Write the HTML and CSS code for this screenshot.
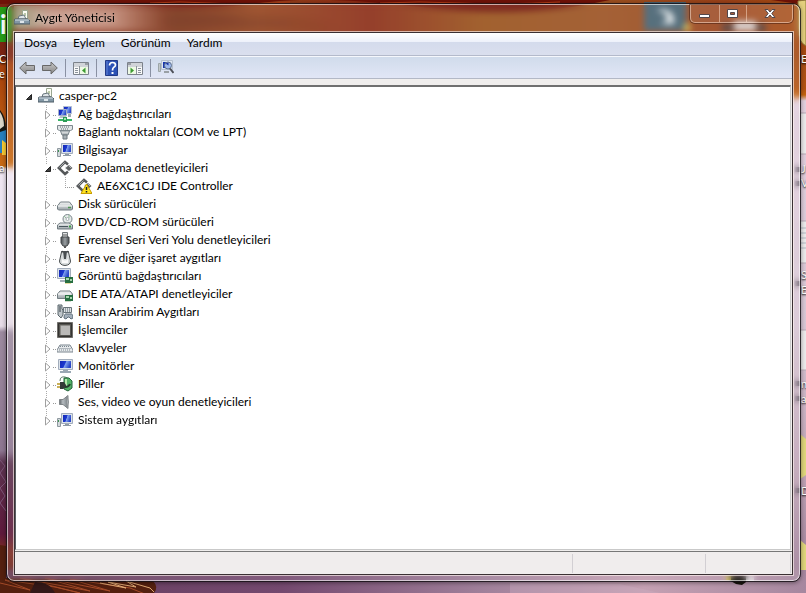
FILE: index.html
```html
<!DOCTYPE html>
<html lang="tr">
<head>
<meta charset="utf-8">
<meta name="viewport" content="width=device-width, initial-scale=1">
<title>Aygıt Yöneticisi</title>
<link rel="stylesheet" href="styles.css">
</head>
<body>
<svg class="wallpaper" viewBox="0 0 806 593" preserveAspectRatio="none" aria-hidden="true">
  <defs>
    <linearGradient id="sky" x1="0" y1="0" x2="0" y2="1">
      <stop offset="0" stop-color="#8c3412"/><stop offset=".06" stop-color="#9a4a1c"/><stop offset=".15" stop-color="#b35412"/>
      <stop offset=".16" stop-color="#c4640e"/><stop offset=".17" stop-color="#e2d0de"/><stop offset=".55" stop-color="#d8c6d4"/>
      <stop offset=".8" stop-color="#bfa3b5"/><stop offset="1" stop-color="#9a7a94"/>
    </linearGradient>
    <linearGradient id="left" x1="0" y1="0" x2="0" y2="1">
      <stop offset="0" stop-color="#8c2c10"/><stop offset=".12" stop-color="#a8430c"/><stop offset=".28" stop-color="#c76a14"/>
      <stop offset=".285" stop-color="#efe6f2"/><stop offset=".55" stop-color="#e6dbe6"/><stop offset=".56" stop-color="#9c8a9f"/>
      <stop offset=".76" stop-color="#8d7690"/><stop offset=".78" stop-color="#5c3450"/><stop offset=".9" stop-color="#5e1a3c"/>
      <stop offset=".93" stop-color="#7c2c22"/><stop offset="1" stop-color="#5c2010"/>
    </linearGradient>
    <linearGradient id="sea" x1="0" y1="0" x2="1" y2="0">
      <stop offset="0" stop-color="#643c5c"/><stop offset=".35" stop-color="#74496f"/><stop offset=".6" stop-color="#a0809a"/>
      <stop offset=".8" stop-color="#c4a0b2"/><stop offset="1" stop-color="#a6879f"/>
    </linearGradient>
    <linearGradient id="top" x1="0" y1="0" x2="1" y2="0">
      <stop offset="0" stop-color="#7a2412"/><stop offset=".12" stop-color="#93402a"/><stop offset=".22" stop-color="#7c3418"/>
      <stop offset=".32" stop-color="#94431c"/><stop offset=".46" stop-color="#8a2a14"/><stop offset=".6" stop-color="#985018"/>
      <stop offset=".75" stop-color="#9a5020"/><stop offset=".9" stop-color="#984018"/><stop offset="1" stop-color="#a64b12"/>
    </linearGradient>
    <filter id="soft" x="-10%" y="-60%" width="120%" height="220%"><feGaussianBlur stdDeviation="4"/></filter>
    <linearGradient id="haze" x1="0" y1="0" x2="1" y2="0">
      <stop offset="0" stop-color="#9fb894"/><stop offset=".25" stop-color="#cfa898"/><stop offset=".7" stop-color="#cf9f8c" stop-opacity=".8"/><stop offset="1" stop-color="#c08468" stop-opacity="0"/>
    </linearGradient>
  </defs>
  <rect width="806" height="593" fill="url(#sky)"/>
  <rect width="400" height="593" fill="url(#left)"/>
  <rect width="806" height="60" fill="url(#top)"/>
  <path d="M0 4Q60 1 130 6T260 3T420 7T600 2T806 5V0H0z" fill="#6f1208"/>
  <path d="M150 3Q180 1 210 3T290 2M380 3Q420 1 460 3T560 2" stroke="#b33c14" fill="none"/>
  <path d="M165 18Q210 10 250 19Q290 16 335 30L300 26Q230 30 165 24z" fill="#642410" opacity=".5" filter="url(#soft)"/>
  <rect x="14" y="6" width="150" height="24" fill="url(#haze)" opacity=".8"/>
  <rect x="-2" y="7" width="14" height="35" fill="#269b18"/>
  <rect x="644" y="2" width="42" height="29" fill="#45606f"/><path d="M656 10q20-3 18 14h-14q16-7-4-14" fill="#dbe1e4"/>
  <path d="M684 24h6v7h-6z" fill="#d6c24d"/><rect x="734" y="21" width="22" height="10" fill="#d4cccb"/><path d="M722 24h12v7h-12zM756 24h10v7h-10z" fill="#4b3a38"/>
  <path d="M798 1l8-1v46q-8-4-8-18z" fill="#e3cf7d" stroke="#8d7639"/>
  <path d="M0 110q6 7 6 19t-6 20z" fill="#151711"/><path d="M0 112q4 6 4 14l-4 3z" fill="#d9d5c6"/>
  <path d="M0 132l6-2v23H0z" fill="#277fbd"/><path d="M2 140l4 3v12H2z" fill="#f5ca35"/>
  <g fill="#ebe9ea" stroke="#b8a9b5"><path d="M800 113h8v41h-8zM800 221h8v42h-8zM800 330h8v40h-8z"/></g>
  <path d="M800 228h6m-6 5h6m-6 5h6m-6 5h6m-6 5h6" stroke="#b3b9c2"/>
  <path d="M800 434l6 5v36l-6 4zM800 540l6 5v38l-6 5z" fill="#dfd67b"/>
  <path d="M795 167h5v5h-5zM795 181h5v5h-5zM795 281h5v5h-5zM795 381h5v5h-5zM795 396h5v5h-5zM795 488h5v5h-5z" fill="#4d4650"/>
  <rect y="570" width="806" height="23" fill="url(#sea)"/>
  <path d="M0 545l6 1v32l147 3q6 6 1 12H0z" fill="#54200f"/>
  <path d="M0 583l30 7L5 580l50 7 25 6-60-15 70 13-45-13 65 13-40-12 60 9 20 8" fill="none" stroke="#a34a28"/>
  <path d="M100 583l26 5-18-6 28 5-10-6 24 7 4 4" fill="none" stroke="#e0a873"/>
  <path d="M35 582q15 0 20 11H30z" fill="#331818"/>
  <path d="M0 460l5 6-5 7 6 9-6 6 5 8-5 7 6 8" fill="none" stroke="#7c5677"/>
  <path d="M510 593v-10l110 1 40 9z" fill="#cdaec2" opacity=".35"/>
  <path d="M728 574h18v8l-4 3-6-1-7-4z" fill="#17130d"/><path d="M726 574h5v6h-5z" fill="#d6c54e"/><path d="M746 574h8v7h-8z" fill="#e2dce0"/>
</svg>
<div class="desktop-labels" aria-hidden="true">
  <span class="tile-letter">i</span><span class="dl l1">C</span><span class="dl l2">e</span><span class="dl l3">a</span>
  <span class="dl r1">ES</span><span class="dl r2">J</span><span class="dl r3">V</span><span class="dl r4">S</span><span class="dl r5">E</span><span class="dl r6">n</span><span class="dl r7">a</span><span class="dl r8">D</span>
</div>

<svg class="sprites" aria-hidden="true">
  <defs>
    <linearGradient id="blue" x1="0" y1="0" x2="1" y2=".3"><stop offset="0" stop-color="#1428b4"/><stop offset=".5" stop-color="#1c38d0"/><stop offset=".58" stop-color="#7fa0ee"/><stop offset="1" stop-color="#2a48c8"/></linearGradient>
    <linearGradient id="metal" x1="0" y1="0" x2="0" y2="1"><stop offset="0" stop-color="#f4f6f6"/><stop offset="1" stop-color="#9ba3a8"/></linearGradient>
    <linearGradient id="dark" x1="0" y1="0" x2="1" y2="0"><stop offset="0" stop-color="#4a4f52"/><stop offset=".5" stop-color="#9a9fa2"/><stop offset="1" stop-color="#4a4f52"/></linearGradient>
    <linearGradient id="cone" x1="0" y1="0" x2="1" y2="0"><stop offset="0" stop-color="#60666a"/><stop offset=".4" stop-color="#b6bcc0"/><stop offset="1" stop-color="#777e83"/></linearGradient>
    <linearGradient id="arrow" x1="0" y1="0" x2="0" y2="1"><stop offset="0" stop-color="#c9c9c9"/><stop offset="1" stop-color="#858585"/></linearGradient>
  </defs>
  <symbol id="i-pc" viewBox="0 0 16 16"><path d="M8.500.5h5v8h-5z" fill="#fbfcf4" stroke="#9aa791"/><path d="M10 3h2v3h-2z" fill="#b9c7a8"/><path d="M5 6l5-1 2 4H4z" fill="#dfe5e8" stroke="#6a777e"/><path d="M1 9h13l2 2v3H0v-3z" fill="#8297a5" stroke="#4e5c66"/><path d="M1 10h14" stroke="#d3dfe6"/><path d="M6 11h4v2H6z" fill="#dde6eb"/></symbol>
  <symbol id="i-net" viewBox="0 0 16 16"><path d="M6.500.5h8v7h-8z" fill="url(#blue)" stroke="#b4bfd2"/><path d="M1.500 3.500h8v6h-8z" fill="url(#blue)" stroke="#a5b0c8"/><path d="M3 10h6l1 2H2z" fill="#b9c3ca"/><path d="M11 8h3v3h-3z" fill="#9eaab2"/><path d="M1 13h14v2H1z" fill="#38b466"/><path d="M6 11h4v5H6z" fill="#2a9b55"/><path d="M7 12h2v2H7z" fill="#9be5ae"/></symbol>
  <symbol id="i-port" viewBox="0 0 16 16"><path d="M.5 1.500h15v4l-2 1h-11l-2-1z" fill="#e1e5e7" stroke="#7c878d"/><path d="M3 3h10M4 5h8" stroke="#616c73" stroke-dasharray="1 1"/><path d="M3.500 7h9l-1.500 4H5z" fill="url(#metal)" stroke="#7b868c"/><path d="M6 11h4v4H6z" fill="#a9b2b7" stroke="#6e797f"/></symbol>
  <symbol id="i-comp" viewBox="0 0 16 16"><path d="M.5 6.500h3v8h-3z" fill="#d3d9dc" stroke="#8e999f"/><path d="M1 8h1v2H1z" fill="#3d9451"/><path d="M4.500 1.500h11v10h-11z" fill="#dce2e9" stroke="#a2adbc"/><path d="M6 3h8v7H6z" fill="url(#blue)"/><path d="M8 12h4v1h2v1H6v-1h2z" fill="#8f9ba6"/></symbol>
  <symbol id="i-ctrl" viewBox="0 0 16 16"><path d="M11 4.500L8 2 1.800 8l6.200 6 3-2.500" fill="none" stroke="#55585a" stroke-width="2.500"/><path d="M7.500 2.500L2.500 7.500" stroke="#adb1b3"/><path d="M8 8h6" stroke="#e6e8e8" stroke-width="3"/><path d="M12 5l3.500 3L12 11 8.500 8z" fill="#5c5f61"/><path d="M12 6l2 2" stroke="#b4b6b7"/></symbol>
  <symbol id="i-warn" viewBox="0 0 16 16"><use href="#i-ctrl"/><path d="M10.500 6L16 15.500H5z" fill="#ffe31e" stroke="#c79c00"/><path d="M10.500 9v3m0 1v1.500" stroke="#222" stroke-width="1.500"/></symbol>
  <symbol id="i-disk" viewBox="0 0 16 16"><path d="M3.500 6h9l3 4v3l-1 1h-13l-1-1v-3z" fill="url(#metal)" stroke="#727d82"/><path d="M1 10h14" stroke="#f6f8f8"/><path d="M11 11.500h3" stroke="#4c944f" stroke-width="1.500"/></symbol>
  <symbol id="i-dvd" viewBox="0 0 16 16"><circle cx="10.500" cy="5" r="4.500" fill="#e7ebea" stroke="#79858a"/><circle cx="10.500" cy="5" r="1.500" fill="#fff" stroke="#a2acaf"/><path d="M7 2l2 2m3-3v3" stroke="#91ba9a"/><path d="M3 9h9l3.500 2v4H.5v-4z" fill="url(#metal)" stroke="#727d82"/><path d="M2 12.500h9" stroke="#48565d"/><path d="M12 12.500h2" stroke="#3ca044" stroke-width="2"/></symbol>
  <symbol id="i-usb" viewBox="0 0 16 16"><path d="M5.500.5h5v5h-5z" fill="#e0e3e4" stroke="#71777a"/><path d="M7 2v2m2-2v2" stroke="#555"/><path d="M4 5h8v6l-2 3H6l-2-3z" fill="url(#dark)" stroke="#44484a"/><path d="M7 14h2v2H7z" fill="#555"/></symbol>
  <symbol id="i-mouse" viewBox="0 0 16 16"><path d="M5 1l1 5M11 1l-1 5" stroke="#383c3e" stroke-width="2"/><path d="M4.500 2h7l2 9q0 4-5.500 4.500Q2.500 15 2.500 11z" fill="#d8dcdd" stroke="#4a4f51"/><path d="M6 1h4l-1 8H7z" fill="#484d50"/><path d="M5 9q3 3 6 0v4H5z" fill="#fafafa"/></symbol>
  <symbol id="i-disp" viewBox="0 0 16 16"><path d="M.5.500h13v10H.5z" fill="#dce2e9" stroke="#a2adbc"/><path d="M2 2h10v7H2z" fill="url(#blue)"/><path d="M3 12h5v2H3z" fill="#a4afb9"/><path d="M8 9h8v6H8z" fill="#276e41"/><path d="M9 10h3v2H9zM13 11h2v2h-2z" fill="#a6d5ad"/><path d="M9 15v1m2-1v1m2-1v1" stroke="#d1b944"/></symbol>
  <symbol id="i-ide" viewBox="0 0 16 16"><path d="M3 5h10l2.500 3v4.500H.5V8z" fill="url(#metal)" stroke="#737e83"/><path d="M1 8h13" stroke="#fff"/><path d="M8 9h8v6H8z" fill="#276e41"/><path d="M9 10h3v2H9zM13 11h2v2h-2z" fill="#a6d5ad"/><path d="M9 15v1m2-1v1m2-1v1" stroke="#a5b697"/></symbol>
  <symbol id="i-hid" viewBox="0 0 16 16"><path d="M1 1h4v4l1 1v5l-2 3-3-3V6z" fill="#bfc6ca" stroke="#59646a"/><path d="M3 2v6" stroke="#343e44"/><path d="M6.500 3.500h8v5h-8z" fill="#dce1e4" stroke="#687379"/><path d="M8 5h6M8 7h6" stroke="#4f5b61" stroke-dasharray="1 1"/><path d="M7 14q0-5 3-4h3q3-1 3 4l-2 1-2-2h-1l-2 2z" fill="#a3afba" stroke="#606f7b"/></symbol>
  <symbol id="i-cpu" viewBox="0 0 16 16"><path d="M.5.5h15v15H.5z" fill="#6a6861" stroke="#2e2d29" stroke-dasharray="1 1"/><path d="M1.500 1.500h13v13h-13z" fill="#55544f" stroke="#343331"/><path d="M4 4h9v9H4z" fill="#bab9b7"/><path d="M3.500 13V3.500H13" stroke="#8c8b87" fill="none"/></symbol>
  <symbol id="i-key" viewBox="0 0 16 16"><path d="M3 5h10l3 5v2H0v-2z" fill="#e7eaec" stroke="#7b858e"/><path d="M3 6.500h10M2.500 8.500h11M2 10h12" stroke="#7b8790" stroke-dasharray="1 1"/></symbol>
  <symbol id="i-mon" viewBox="0 0 16 16"><path d="M1.500 1.500h14v10h-14z" fill="#dce2e9" stroke="#a2adbc"/><path d="M3 3h11v7H3z" fill="url(#blue)"/><path d="M6 12h5v1h3v2H3v-2h3z" fill="#9ba8b4"/></symbol>
  <symbol id="i-bat" viewBox="0 0 16 16"><path d="M3 5q0-5 5-4t5 4" fill="none" stroke="#5d7c68"/><path d="M7 2h5l3 3v7l-4 3-4-2z" fill="#54b267" stroke="#23633a"/><path d="M9 3v8" stroke="#b6e9ae" stroke-width="2"/><path d="M0 8h3m-3 3h3" stroke="#b89724" stroke-width="1.500"/><path d="M3 6h4l2 3v2l-3 2H3z" fill="#333a37"/><path d="M8 11q4 0 5-3" stroke="#263c2d" stroke-width="2" fill="none"/></symbol>
  <symbol id="i-snd" viewBox="0 0 16 16"><path d="M2.500 5.500H6l5-4v13l-5-4H2.500z" fill="url(#cone)" stroke="#7f8588"/><path d="M10 2q3 6 0 12z" fill="#cdd2d5" stroke="#8b9093"/></symbol>
  <symbol id="i-back" viewBox="0 0 16 16"><path d="M.7 8L7 2v3.500h8.500v5H7V14z" fill="url(#arrow)" stroke="#686868"/></symbol>
  <symbol id="i-pane" viewBox="0 0 16 16"><path d="M.5 2.500h15v12H.5z" fill="#fafafa" stroke="#7c828b"/><path d="M1 4h14M1 6h14" stroke="#a8aeb7"/><path d="M12 4h3" stroke="#626971"/><path d="M6.500 6v8" stroke="#8d949b"/><path d="M2 8.500h3m-3 2h3m-3 2h3" stroke="#8a929a"/><path d="M7 7h8v7H7z" fill="#eefae4"/><path d="M12.500 7.500v6L9 10.500z" fill="#3d9b32"/></symbol>
  <symbol id="i-help" viewBox="0 0 16 16"><path d="M1.500.5h12v15h-12z" fill="#2c51b5" stroke="#233a86"/><path d="M3 1v14" stroke="#6384d6"/><path d="M5.500 5.500q0-3 3-3t3 2.500q0 1.500-2 2.500-1 1-1 3" fill="none" stroke="#fff" stroke-width="1.700"/><path d="M7.500 12h2v2h-2z" fill="#fff"/></symbol>
  <symbol id="i-scan" viewBox="0 0 16 16"><path d="M.5 3.500h2v8h-2z" fill="#c3c9ca" stroke="#9da6a8"/><path d="M3.500.5h11v9h-11z" fill="#dde5f2" stroke="#b4bfce"/><path d="M5 2h4v6H5z" fill="#1735ab"/><circle cx="10" cy="5.500" r="3.500" fill="#9db8ec" stroke="#5f718e"/><path d="M7.500 3.500l3-1v3z" fill="#1931a2"/><path d="M12 8.500l3.500 4.500" stroke="#4c4e57" stroke-width="2"/><path d="M6 12h5" stroke="#9aa0a5" stroke-width="2"/></symbol>
  <symbol id="i-closed" viewBox="0 0 10 10"><path d="M2.500 1v8L7 5z" fill="#fff" stroke="#a0a0a0"/></symbol>
  <symbol id="i-open" viewBox="0 0 10 10"><path d="M7.500 2.500v5h-5z" fill="#404040" stroke="#222"/></symbol>
</svg>

<main class="window">
  <header class="titlebar">
    <svg class="icon"><use href="#i-pc"/></svg>
    <h1>Aygıt Yöneticisi</h1>
    <div class="controls">
      <button class="min" aria-label="Simge durumuna küçült"><svg viewBox="0 0 14 12"><path d="M1.500 6.500h10v3h-10z" fill="#fff" stroke="#53474a"/></svg></button>
      <button class="max" aria-label="Ekranı kapla"><svg viewBox="0 0 14 12"><path d="M1.500 1.500h10v8h-10zM4.500 4.500h4v2h-4z" fill="#fff" fill-rule="evenodd" stroke="#53474a"/></svg></button>
      <button class="close" aria-label="Kapat"><svg viewBox="0 0 14 12"><path d="M2 1.500h3L7 4l2-2.500h3L8.800 5.500 12 9.500H9L7 7 5 9.500H2l3.200-4z" fill="#fff" stroke="#53474a"/></svg></button>
    </div>
  </header>
  <div class="client">
    <nav class="menu">
      <button>Dosya</button><button>Eylem</button><button>Görünüm</button><button>Yardım</button>
    </nav>
    <div class="toolbar" role="toolbar">
      <button aria-label="Geri"><svg class="icon"><use href="#i-back"/></svg></button>
      <button aria-label="İleri"><svg class="icon flip"><use href="#i-back"/></svg></button>
      <span class="sep"></span>
      <button aria-label="Konsol ağacı"><svg class="icon"><use href="#i-pane"/></svg></button>
      <span class="sep"></span>
      <button aria-label="Yardım"><svg class="icon"><use href="#i-help"/></svg></button>
      <button aria-label="Eylem bölmesi"><svg class="icon flip"><use href="#i-pane"/></svg></button>
      <span class="sep"></span>
      <button aria-label="Donanım değişikliklerini tara"><svg class="icon"><use href="#i-scan"/></svg></button>
    </div>
    <section class="view">
      <ul class="tree">
        <li>
          <div class="row root"><button class="toggle" aria-label="Daralt"><svg><use href="#i-open"/></svg></button><svg class="icon"><use href="#i-pc"/></svg><span>casper-pc2</span></div>
          <ul>
            <li><div class="row"><button class="toggle" aria-label="Genişlet"><svg><use href="#i-closed"/></svg></button><svg class="icon"><use href="#i-net"/></svg><span>Ağ bağdaştırıcıları</span></div></li>
            <li><div class="row"><button class="toggle" aria-label="Genişlet"><svg><use href="#i-closed"/></svg></button><svg class="icon"><use href="#i-port"/></svg><span>Bağlantı noktaları (COM ve LPT)</span></div></li>
            <li><div class="row"><button class="toggle" aria-label="Genişlet"><svg><use href="#i-closed"/></svg></button><svg class="icon"><use href="#i-comp"/></svg><span>Bilgisayar</span></div></li>
            <li><div class="row"><button class="toggle" aria-label="Daralt"><svg><use href="#i-open"/></svg></button><svg class="icon"><use href="#i-ctrl"/></svg><span>Depolama denetleyicileri</span></div>
              <ul>
                <li><div class="row"><span class="toggle"></span><svg class="icon"><use href="#i-warn"/></svg><span>AE6XC1CJ IDE Controller</span></div></li>
              </ul>
            </li>
            <li><div class="row"><button class="toggle" aria-label="Genişlet"><svg><use href="#i-closed"/></svg></button><svg class="icon"><use href="#i-disk"/></svg><span>Disk sürücüleri</span></div></li>
            <li><div class="row"><button class="toggle" aria-label="Genişlet"><svg><use href="#i-closed"/></svg></button><svg class="icon"><use href="#i-dvd"/></svg><span>DVD/CD-ROM sürücüleri</span></div></li>
            <li><div class="row"><button class="toggle" aria-label="Genişlet"><svg><use href="#i-closed"/></svg></button><svg class="icon"><use href="#i-usb"/></svg><span>Evrensel Seri Veri Yolu denetleyicileri</span></div></li>
            <li><div class="row"><button class="toggle" aria-label="Genişlet"><svg><use href="#i-closed"/></svg></button><svg class="icon"><use href="#i-mouse"/></svg><span>Fare ve diğer işaret aygıtları</span></div></li>
            <li><div class="row"><button class="toggle" aria-label="Genişlet"><svg><use href="#i-closed"/></svg></button><svg class="icon"><use href="#i-disp"/></svg><span>Görüntü bağdaştırıcıları</span></div></li>
            <li><div class="row"><button class="toggle" aria-label="Genişlet"><svg><use href="#i-closed"/></svg></button><svg class="icon"><use href="#i-ide"/></svg><span>IDE ATA/ATAPI denetleyiciler</span></div></li>
            <li><div class="row"><button class="toggle" aria-label="Genişlet"><svg><use href="#i-closed"/></svg></button><svg class="icon"><use href="#i-hid"/></svg><span>İnsan Arabirim Aygıtları</span></div></li>
            <li><div class="row"><button class="toggle" aria-label="Genişlet"><svg><use href="#i-closed"/></svg></button><svg class="icon"><use href="#i-cpu"/></svg><span>İşlemciler</span></div></li>
            <li><div class="row"><button class="toggle" aria-label="Genişlet"><svg><use href="#i-closed"/></svg></button><svg class="icon"><use href="#i-key"/></svg><span>Klavyeler</span></div></li>
            <li><div class="row"><button class="toggle" aria-label="Genişlet"><svg><use href="#i-closed"/></svg></button><svg class="icon"><use href="#i-mon"/></svg><span>Monitörler</span></div></li>
            <li><div class="row"><button class="toggle" aria-label="Genişlet"><svg><use href="#i-closed"/></svg></button><svg class="icon"><use href="#i-bat"/></svg><span>Piller</span></div></li>
            <li><div class="row"><button class="toggle" aria-label="Genişlet"><svg><use href="#i-closed"/></svg></button><svg class="icon"><use href="#i-snd"/></svg><span>Ses, video ve oyun denetleyicileri</span></div></li>
            <li><div class="row"><button class="toggle" aria-label="Genişlet"><svg><use href="#i-closed"/></svg></button><svg class="icon"><use href="#i-comp"/></svg><span>Sistem aygıtları</span></div></li>
          </ul>
        </li>
      </ul>
    </section>
    <footer class="status"><span></span><span></span><span></span></footer>
  </div>
</main>
</body>
</html>
```
FILE: styles.css
```css
* { box-sizing: border-box; }

body {
  margin: 0;
  min-height: 100vh;
  padding: 4px 6px 12px 7px;
  display: flex;
  position: relative;
  overflow: hidden;
  background: #9a4a1c;
  color: #000;
  font: 12px/18px Lato, "Open Sans", sans-serif;
}

button {
  margin: 0;
  padding: 0;
  border: 0;
  background: none;
  font: inherit;
  color: inherit;
}

svg { display: block; }
.sprites { position: absolute; width: 0; height: 0; }
.icon { width: 16px; height: 16px; flex: none; }
.flip { transform: scaleX(-1); }

/* Desktop behind the window */
.wallpaper { position: absolute; left: 0; top: 0; width: 100%; height: 100%; }
.desktop-labels { position: absolute; inset: 0; overflow: hidden; color: #fff; text-shadow: 0 1px 2px #000; }
.dl { position: absolute; font-size: 11px; line-height: 13px; }
.tile-letter { position: absolute; left: 0; top: 8px; font-size: 26px; line-height: 32px; font-weight: 700; text-shadow: none; }
.l1 { left: -1px; top: 52px; }
.l2 { left: -1px; top: 67px; }
.l3 { left: -1px; top: 161px; }
.r1, .r2, .r3, .r4, .r5, .r6, .r7, .r8 { left: calc(100% - 5px); }
.r1 { top: 52px; }
.r2 { top: 162px; }
.r3 { top: 176px; }
.r4 { top: 268px; }
.r5 { top: 283px; }
.r6 { top: 377px; }
.r7 { top: 392px; }
.r8 { top: 484px; }

/* Glass frame */
.window {
  flex: 1;
  min-width: 0;
  position: relative;
  display: flex;
  flex-direction: column;
  padding: 0 6px 5px;
  border: 1px solid rgba(255, 255, 255, .6);
  border-radius: 7px;
  outline: 1px solid rgba(20, 15, 20, .8);
  background: rgba(255, 255, 255, .1);
  backdrop-filter: blur(3px);
  box-shadow: 0 1px 4px 1px rgba(0, 0, 0, .4);
}

.titlebar { display: flex; height: 27px; }
.titlebar .icon { margin-top: 5px; }
h1 { margin: 4px 0 0 5px; font: inherit; flex: 1; text-shadow: 0 0 6px rgba(255, 255, 255, .7); }

.controls {
  display: flex;
  height: 18px;
  border: 1px solid rgba(255, 230, 215, .55);
  border-top: 0;
  border-radius: 0 0 5px 5px;
  box-shadow: 0 0 0 1px rgba(60, 25, 15, .5);
}
.controls button { display: flex; align-items: center; justify-content: center; background: rgba(255, 255, 255, .06); }
.controls button + button { border-left: 1px solid rgba(255, 225, 205, .5); }
.controls svg { width: 14px; height: 12px; }
.min { width: 28px; }
.max { width: 27px; }
.close { width: 46px; }

.client {
  flex: 1;
  display: flex;
  flex-direction: column;
  border: 1px solid #3a3033;
  outline: 1px solid rgba(255, 245, 240, .65);
  background: #f0eeed;
}

.menu {
  display: flex;
  align-items: flex-start;
  gap: 16px;
  height: 23px;
  padding: 1px 9px 0;
  border-bottom: 1px solid #b4bacb;
  background: linear-gradient(#fff, #edf1fa 9px, #d4dbec 9px, #dadfee);
}

.toolbar {
  display: flex;
  align-items: center;
  height: 23px;
  padding: 1px 4px 0;
  gap: 7px;
  border-top: 1px solid #f5f7fc;
  border-bottom: 1px solid #b3b8c6;
  background: linear-gradient(#d0dbeb, #e1e6f6);
}
.sep { width: 1px; height: 18px; background: #8a91a3; }

.view {
  flex: 1;
  margin: 6px 1px 1px 0;
  padding: 0 3px;
  border: 1px solid #c9c9c9;
  border-top: 2px solid #707070;
  border-left-color: #5c6065;
  background: #fff;
}

/* Device tree */
.tree, .tree ul { margin: 0; padding: 0; list-style: none; }
.tree ul { padding-left: 19px; }
.row { display: flex; align-items: center; height: 18px; white-space: nowrap; }
.row .icon { margin-right: 5px; }
.toggle { display: flex; align-items: center; width: 19px; height: 18px; padding: 2px 0 0 5px; }
.toggle svg { width: 10px; height: 10px; }
.tree ul .toggle {
  background: repeating-linear-gradient(90deg, #999 0 1px, transparent 1px 2px) 15px 10px / 4px 1px no-repeat;
}
.tree ul > li {
  background: repeating-linear-gradient(#aaa 0 1px, transparent 1px 2px) 8px 0 / 1px 100% no-repeat;
}
.tree ul ul > li { background-size: 1px 10px; }
.tree ul ul .toggle { background-position: 8px 10px; background-size: 10px 1px; }
.tree ul .toggle svg { background: #fff; }
.tree > li > ul > li:last-child { background-size: 1px 10px; }

.status {
  display: flex;
  height: 23px;
  padding: 2px 1px 1px 0;
  border-top: 1px solid #777;
  background: #f0eded;
}
.status span { border-right: 1px solid #d2cfd3; }
.status span:nth-child(1) { flex: 1; }
.status span:nth-child(2) { width: 133px; }
.status span:nth-child(3) { width: 85px; }
```
